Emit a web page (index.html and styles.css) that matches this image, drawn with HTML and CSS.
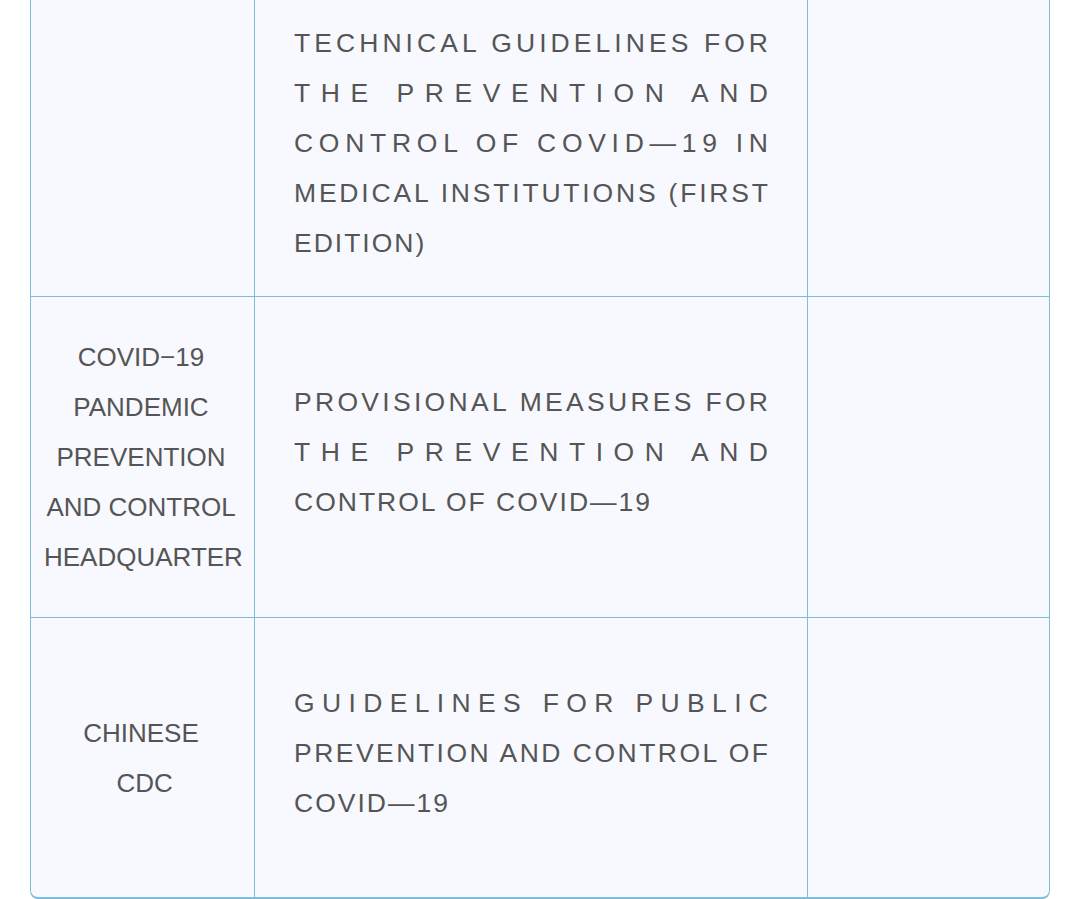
FILE: index.html
```html
<!DOCTYPE html>
<html lang="en">
<head>
<meta charset="utf-8">
<title>COVID-19 guidelines</title>
<link rel="stylesheet" href="styles.css">
</head>
<body>
<div class="table">
  <div class="row row-first">
    <div class="cell cell-org"></div>
    <div class="cell cell-title">
      <p class="title">
        <span class="line fill">TECHNICAL GUIDELINES FOR</span>
        <span class="line fill">THE PREVENTION AND</span>
        <span class="line fill">CONTROL OF COVID—19 IN</span>
        <span class="line fill">MEDICAL INSTITUTIONS (FIRST</span>
        <span class="line">EDITION)</span>
      </p>
    </div>
    <div class="cell cell-extra"></div>
  </div>
  <div class="row row-second">
    <div class="cell cell-org"><p class="org">COVID−19 PANDEMIC PREVENTION AND CONTROL HEADQUARTER</p></div>
    <div class="cell cell-title">
      <p class="title">
        <span class="line fill">PROVISIONAL MEASURES FOR</span>
        <span class="line fill">THE PREVENTION AND</span>
        <span class="line">CONTROL OF COVID—19</span>
      </p>
    </div>
    <div class="cell cell-extra"></div>
  </div>
  <div class="row row-third">
    <div class="cell cell-org"><p class="org">CHINESE<br>&nbsp;CDC</p></div>
    <div class="cell cell-title">
      <p class="title">
        <span class="line fill">GUIDELINES FOR PUBLIC</span>
        <span class="line fill">PREVENTION AND CONTROL OF</span>
        <span class="line">COVID—19</span>
      </p>
    </div>
    <div class="cell cell-extra"></div>
  </div>
</div>
<script src="script.js"></script>
</body>
</html>
```

FILE: styles.css
```css
html, body {
  margin: 0;
  padding: 0;
  background: #ffffff;
}

body {
  padding: 0 30px;
  height: 899px;
  overflow: hidden;
  font-family: "Liberation Sans", Arial, sans-serif;
  color: #555555;
}

.table {
  border: 1px solid #7dbdd5;
  border-top: none;
  border-bottom-width: 2px;
  border-radius: 0 0 8px 8px;
  background: #f7f9ff;
  overflow: hidden;
}

.row {
  display: grid;
  grid-template-columns: 224px 553px 1fr;
}

.row + .row {
  border-top: 1px solid #7dbdd5;
}

.row-first {
  height: 296px;
}

.row-second {
  height: 320px;
}

.row-third {
  height: 279px;
}

.cell {
  display: flex;
  align-items: center;
  min-width: 0;
}

.cell-org,
.cell-title {
  border-right: 1px solid #7dbdd5;
}

.cell-org {
  padding: 0 16px 0 13px;
  justify-content: center;
}

.cell-title {
  padding: 0 33px 10px 39px;
}

.org {
  margin: 0;
  width: 100%;
  font-size: 26px;
  line-height: 50px;
  text-align: center;
}

.title {
  margin: 0;
  width: 100%;
  font-size: 26.5px;
  line-height: 50px;
  letter-spacing: 2px;
}

.line {
  display: block;
  white-space: nowrap;
}
```

FILE: script.js
```js
(function () {
  var TARGET = 474;
  var lines = document.querySelectorAll('.line.fill');
  lines.forEach(function (el) {
    el.style.letterSpacing = '0px';
    var range = document.createRange();
    range.selectNodeContents(el);
    var w = range.getBoundingClientRect().width;
    var text = el.textContent.trim();
    var n = text.length;
    if (n > 1) {
      var ls = (TARGET - w) / (n - 1);
      el.style.letterSpacing = ls.toFixed(3) + 'px';
    }
  });
})();
```
